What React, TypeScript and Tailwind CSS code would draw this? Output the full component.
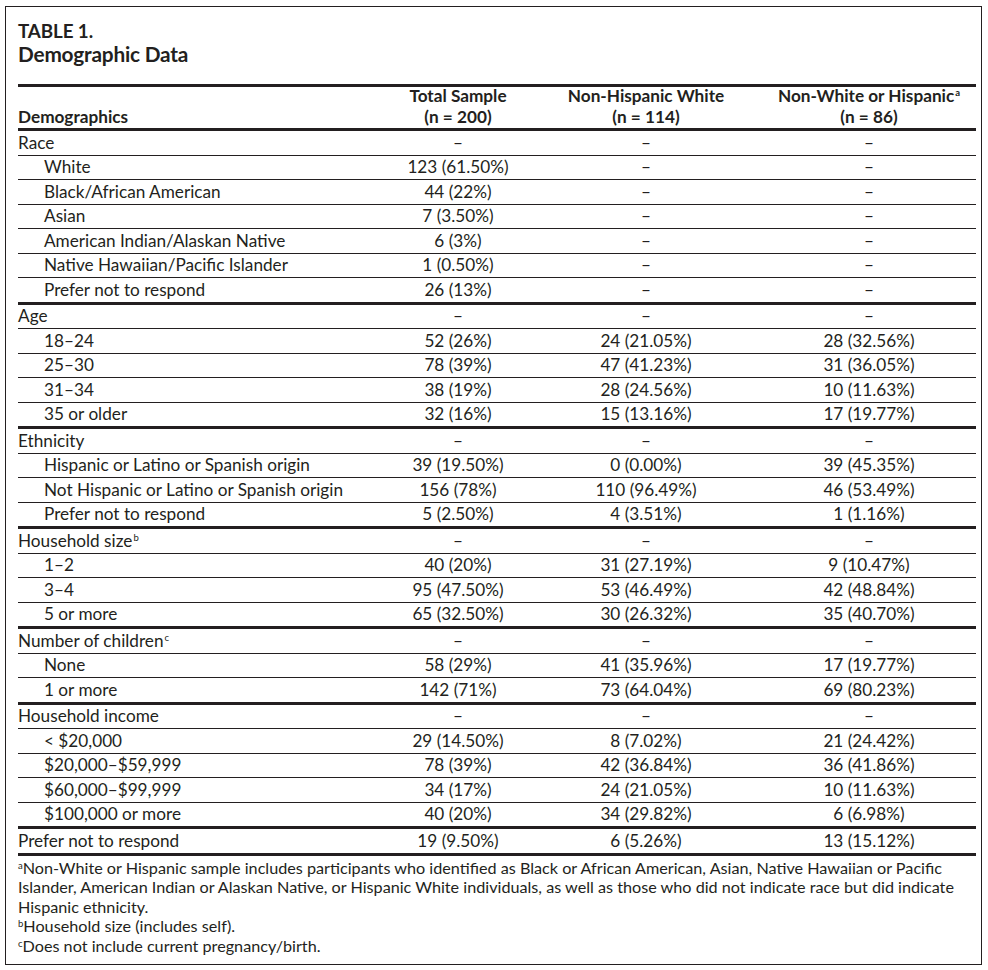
import React from "react";

type Row = { label: string; indent?: boolean; sup?: string; v: [string, string, string] };
type Group = Row[];

const D: [string, string, string] = ["–", "–", "–"];

const groups: Group[] = [
  [
    { label: "Race", v: D },
    { label: "White", indent: true, v: ["123 (61.50%)", "–", "–"] },
    { label: "Black/African American", indent: true, v: ["44 (22%)", "–", "–"] },
    { label: "Asian", indent: true, v: ["7 (3.50%)", "–", "–"] },
    { label: "American Indian/Alaskan Native", indent: true, v: ["6 (3%)", "–", "–"] },
    { label: "Native Hawaiian/Pacific Islander", indent: true, v: ["1 (0.50%)", "–", "–"] },
    { label: "Prefer not to respond", indent: true, v: ["26 (13%)", "–", "–"] },
  ],
  [
    { label: "Age", v: D },
    { label: "18–24", indent: true, v: ["52 (26%)", "24 (21.05%)", "28 (32.56%)"] },
    { label: "25–30", indent: true, v: ["78 (39%)", "47 (41.23%)", "31 (36.05%)"] },
    { label: "31–34", indent: true, v: ["38 (19%)", "28 (24.56%)", "10 (11.63%)"] },
    { label: "35 or older", indent: true, v: ["32 (16%)", "15 (13.16%)", "17 (19.77%)"] },
  ],
  [
    { label: "Ethnicity", v: D },
    { label: "Hispanic or Latino or Spanish origin", indent: true, v: ["39 (19.50%)", "0 (0.00%)", "39 (45.35%)"] },
    { label: "Not Hispanic or Latino or Spanish origin", indent: true, v: ["156 (78%)", "110 (96.49%)", "46 (53.49%)"] },
    { label: "Prefer not to respond", indent: true, v: ["5 (2.50%)", "4 (3.51%)", "1 (1.16%)"] },
  ],
  [
    { label: "Household size", sup: "b", v: D },
    { label: "1–2", indent: true, v: ["40 (20%)", "31 (27.19%)", "9 (10.47%)"] },
    { label: "3–4", indent: true, v: ["95 (47.50%)", "53 (46.49%)", "42 (48.84%)"] },
    { label: "5 or more", indent: true, v: ["65 (32.50%)", "30 (26.32%)", "35 (40.70%)"] },
  ],
  [
    { label: "Number of children", sup: "c", v: D },
    { label: "None", indent: true, v: ["58 (29%)", "41 (35.96%)", "17 (19.77%)"] },
    { label: "1 or more", indent: true, v: ["142 (71%)", "73 (64.04%)", "69 (80.23%)"] },
  ],
  [
    { label: "Household income", v: D },
    { label: "< $20,000", indent: true, v: ["29 (14.50%)", "8 (7.02%)", "21 (24.42%)"] },
    { label: "$20,000–$59,999", indent: true, v: ["78 (39%)", "42 (36.84%)", "36 (41.86%)"] },
    { label: "$60,000–$99,999", indent: true, v: ["34 (17%)", "24 (21.05%)", "10 (11.63%)"] },
    { label: "$100,000 or more", indent: true, v: ["40 (20%)", "34 (29.82%)", "6 (6.98%)"] },
  ],
  [{ label: "Prefer not to respond", v: ["19 (9.50%)", "6 (5.26%)", "13 (15.12%)"] }],
];

function Sup({ c }: { c: string }) {
  return <span className="relative -top-[6px] text-[9.5px] leading-none ml-[1px]">{c}</span>;
}

function FSup({ c }: { c: string }) {
  return <span className="relative -top-[5px] text-[9.5px] leading-none">{c}</span>;
}

export default function App() {
  return (
    <div className="w-[988px] h-[970px] bg-white text-[#231f20] font-['Lato',sans-serif] pt-[6px] pl-[5px]">
      <div className="w-[977px] h-[959px] border border-[#231f20] pl-[12px] pr-[5px] pt-[12px]">
        <div className="text-[18.8px] font-bold leading-[23px] tracking-[-0.1px]">TABLE 1.</div>
        <div className="text-[20.8px] font-bold leading-[24px] tracking-[-0.2px]">Demographic Data</div>
        <div className="mt-[18px] w-[958px] border-t-[3px] border-[#231f20]">
          <div className="flex h-[44px] items-end pb-[1px] font-bold text-[17.2px] leading-[20.5px] border-b-[3px] border-[#231f20]">
            <div className="w-[368px]">Demographics</div>
            <div className="w-[144px] text-center">
              <div>Total Sample</div>
              <div>(n = 200)</div>
            </div>
            <div className="w-[232px] text-center">
              <div>Non-Hispanic White</div>
              <div>(n = 114)</div>
            </div>
            <div className="w-[214px] text-center">
              <div>
                Non-White or Hispanic<Sup c="a" />
              </div>
              <div>(n = 86)</div>
            </div>
          </div>
          {groups.map((g, gi) => (
            <div key={gi} className="border-b-[3px] border-[#231f20]">
              {g.map((r, ri) => (
                <div
                  key={ri}
                  className={
                    "flex h-[23.5px] items-center text-[17.2px] leading-[20px] " +
                    (ri < g.length - 1 ? "border-b border-[#231f20] box-content" : "")
                  }
                >
                  <div className={"w-[368px] whitespace-nowrap " + (r.indent ? "pl-[26px]" : "")}>
                    {r.label}
                    {r.sup && <Sup c={r.sup} />}
                  </div>
                  <div className="w-[144px] text-center whitespace-nowrap">{r.v[0]}</div>
                  <div className="w-[232px] text-center whitespace-nowrap">{r.v[1]}</div>
                  <div className="w-[214px] text-center whitespace-nowrap">{r.v[2]}</div>
                </div>
              ))}
            </div>
          ))}
          <div className="pt-[2px] text-[16.2px] leading-[19.5px] pr-[20px]">
            <div>
              <FSup c="a" />
              Non-White or Hispanic sample includes participants who identified as Black or African American, Asian, Native Hawaiian or Pacific Islander, American Indian or Alaskan Native, or Hispanic White individuals, as well as those who did not indicate race but did indicate Hispanic ethnicity.
            </div>
            <div>
              <FSup c="b" />
              Household size (includes self).
            </div>
            <div>
              <FSup c="c" />
              Does not include current pregnancy/birth.
            </div>
          </div>
        </div>
      </div>
    </div>
  );
}
